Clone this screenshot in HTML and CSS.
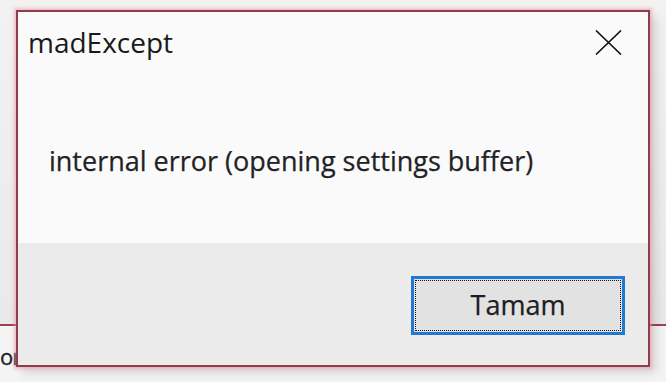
FILE: index.html
```html
<!DOCTYPE html>
<html>
<head>
<meta charset="utf-8">
<link rel="stylesheet" href="styles.css">
</head>
<body>
<div class="desktop">
  <div class="back-window">
    <div class="back-top"></div>
    <div class="back-body"><span class="back-text">or</span></div>
  </div>
  <div class="dialog">
    <div class="titlebar">
      <span class="title">madExcept</span>
      <svg class="close" width="27" height="25" viewBox="0 0 27 25"><path d="M1 0.5 L26 24.5 M26 0.5 L1 24.5" stroke="#111" stroke-width="1.6" fill="none"/></svg>
    </div>
    <div class="content">
      <p class="message">internal error (opening settings buffer)</p>
    </div>
    <div class="footer">
      <button class="btn">Tamam</button>
    </div>
  </div>
</div>
</body>
</html>
```

FILE: styles.css
```css
html, body {
  margin: 0;
  padding: 0;
}
body {
  width: 666px;
  height: 382px;
  overflow: hidden;
  background: #f0f0f0;
  font-family: "Open Sans", "Noto Sans", sans-serif;
}
.desktop {
  position: relative;
  width: 666px;
  height: 382px;
}
.back-window {
  display: flex;
  flex-direction: column;
  height: 382px;
}
.back-top {
  height: 324px;
  background: linear-gradient(#f2f2f2, #e9e9e9);
  border-bottom: 2px solid #9d4253;
}
.back-body {
  flex: 1;
  background: #f4f4f4;
  display: flex;
}
.back-text {
  font-size: 22px;
  line-height: 22px;
  letter-spacing: -1px;
  margin-top: 19px;
  color: #1b1f2e;
  white-space: nowrap;
  -webkit-text-stroke: 0.3px #1b1f2e;
}
.dialog {
  position: absolute;
  left: 16px;
  top: 10px;
  width: 634px;
  height: 357px;
  box-sizing: border-box;
  border: 2px solid #8c3d4e;
  background: #fafafa;
  display: flex;
  flex-direction: column;
  box-shadow: 0 0 3px 2px rgba(240, 150, 165, 0.55), 6px 6px 10px rgba(0, 0, 0, 0.13);
}
.titlebar {
  display: flex;
  justify-content: space-between;
  align-items: flex-start;
  padding: 16px 26px 0 10px;
}
.title {
  font-size: 28px;
  line-height: 28px;
  color: #1a1a1a;
}
.close {
  margin-top: 2px;
}
.content {
  flex: 1;
  padding: 91px 0 0 31px;
}
.message {
  margin: 0;
  font-size: 27px;
  line-height: 27px;
  color: #222226;
  -webkit-text-stroke: 0.25px #222226;
}
.footer {
  height: 122px;
  box-sizing: border-box;
  background: #ebebeb;
  display: flex;
  justify-content: flex-end;
  align-items: flex-start;
  padding: 33px 23px 0 0;
}
.btn {
  width: 214px;
  height: 59px;
  box-sizing: border-box;
  border: 3px solid #2378d2;
  background: #e2e2e2;
  outline: 1px dotted #0f1420;
  outline-offset: -5px;
  font-family: "Open Sans", "Noto Sans", sans-serif;
  font-size: 27px;
  line-height: 27px;
  color: #1d1d22;
  -webkit-text-stroke: 0.25px #1d1d22;
  padding: 0 0 2px 0;
  margin: 0;
}
```
